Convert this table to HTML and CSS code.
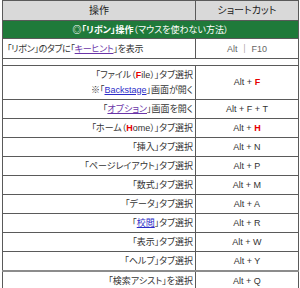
FILE: index.html
```html
<!DOCTYPE html>
<html lang="ja">
<head>
<meta charset="utf-8">
<link rel="stylesheet" href="styles.css">
</head>
<body>
<table class="sc">
  <colgroup><col class="c1"><col class="c2"></colgroup>
  <thead>
    <tr class="hd"><th>操作</th><th>ショートカット</th></tr>
  </thead>
  <tbody>
    <tr class="sec"><td colspan="2"><b>◎「リボン」操作</b>（マウスを使わない方法）</td></tr>
    <tr class="row20"><td class="l">「リボン」のタブに「<a class="lk-v">キーヒント</a>」を表示</td><td class="k muted">Alt ｜ F10</td></tr>
    <tr class="gap"><td colspan="2"></td></tr>
    <tr class="two"><td class="r">「ファイル（<span class="red">F</span>ile）」タブ選択<br>※「<a class="lk-b">Backstage</a>」画面が開く</td><td class="k">Alt + <span class="red">F</span></td></tr>
    <tr class="row"><td class="r">「<a class="lk-v">オプション</a>」画面を開く</td><td class="k">Alt + F + T</td></tr>
    <tr class="row"><td class="r">「ホーム（<span class="red">H</span>ome）」タブ選択</td><td class="k">Alt + <span class="red">H</span></td></tr>
    <tr class="row"><td class="r">「挿入」タブ選択</td><td class="k">Alt + N</td></tr>
    <tr class="row"><td class="r">「ページレイアウト」タブ選択</td><td class="k">Alt + P</td></tr>
    <tr class="row"><td class="r">「数式」タブ選択</td><td class="k">Alt + M</td></tr>
    <tr class="row"><td class="r">「データ」タブ選択</td><td class="k">Alt + A</td></tr>
    <tr class="row"><td class="r">「<a class="lk-b">校閲</a>」タブ選択</td><td class="k">Alt + R</td></tr>
    <tr class="row"><td class="r">「表示」タブ選択</td><td class="k">Alt + W</td></tr>
    <tr class="row"><td class="r">「ヘルプ」タブ選択</td><td class="k">Alt + Y</td></tr>
    <tr class="row last"><td class="r">「検索アシスト」を選択</td><td class="k">Alt + Q</td></tr>
  </tbody>
</table>
</body>
</html>
```
FILE: styles.css
```css
html, body {
  margin: 0;
  background: #fff;
}
.sc {
  border-collapse: collapse;
  table-layout: fixed;
  width: 296px;
  margin-left: 2px;
  font-family: "Liberation Sans", "Noto Sans CJK JP", sans-serif;
  font-feature-settings: "palt";
  font-size: 9px;
  color: #333;
}
.c1 { width: 193px; }
.c2 { width: 103px; }
.sc th, .sc td {
  border: 1px solid #5a5a5a;
  padding: 0;
  line-height: 12px;
}
.hd th {
  height: 19px;
  background: #d9d9d9;
  font-weight: normal;
  font-size: 10px;
  color: #222;
  text-align: center;
}
.sec td {
  height: 17px;
  background: #1f7a3a;
  color: #fff;
  text-align: center;
  font-size: 9px;
}
.sec b { font-weight: 700; }
.row20 td { height: 19px; }
.gap td { height: 6px; }
.two td { height: 33px; line-height: 15px; }
.row td { height: 18px; }
.last td { border-top: 2px solid #8c8c8c; height: 17px; }
.l { text-align: left; padding-left: 4px !important; letter-spacing: -0.3px; }
.r { text-align: right; padding-right: 2px !important; }
.k { text-align: center; }
.muted { color: #666; }
.red { color: #e60000; font-weight: 700; }
.lk-v { color: #6b35a8; text-decoration: underline; }
.lk-b { color: #2c2cc8; text-decoration: underline; }
```
